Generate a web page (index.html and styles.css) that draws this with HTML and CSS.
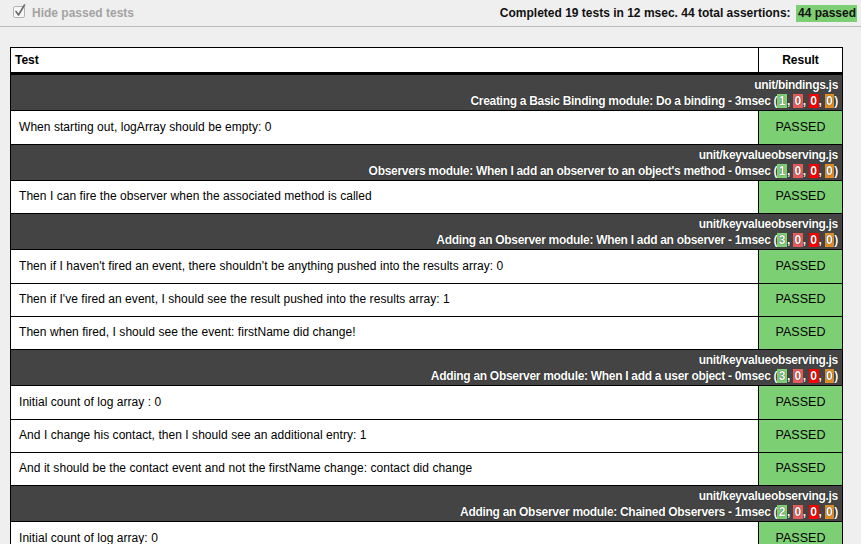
FILE: index.html
```html
<!DOCTYPE html>
<html>
<head>
<meta charset="utf-8">
<link rel="stylesheet" href="styles.css">
</head>
<body>
<div class="topbar">
  <label class="hide">
    <svg class="cb" width="14" height="15" viewBox="0 0 14 15">
      <rect x="0.5" y="2.5" width="11" height="11" rx="1.5" fill="#f7f7f7" stroke="#b3b3b3"/>
      <path d="M3 7.5 L5.5 11 L11.5 1" fill="none" stroke="#6a6a6a" stroke-width="1.6" stroke-linecap="round" stroke-linejoin="round"/>
    </svg>
    <span>Hide passed tests</span>
  </label>
  <div class="summary">Completed 19 tests in 12 msec. 44 total assertions: <span class="allpass">44 passed</span></div>
</div>

<table class="results">
  <thead>
    <tr><th class="th-test">Test</th><th class="th-result">Result</th></tr>
  </thead>
  <tbody>
    <tr class="module"><td colspan="2"><div>unit/bindings.js</div><div>Creating a Basic Binding module: Do a binding - 3msec (<span class="b pass">1</span>, <span class="b fail">0</span>, <span class="b err">0</span>, <span class="b skip">0</span>)</div></td></tr>
    <tr class="test"><td>When starting out, logArray should be empty: 0</td><td class="passed">PASSED</td></tr>

    <tr class="module"><td colspan="2"><div>unit/keyvalueobserving.js</div><div>Observers module: When I add an observer to an object's method - 0msec (<span class="b pass">1</span>, <span class="b fail">0</span>, <span class="b err">0</span>, <span class="b skip">0</span>)</div></td></tr>
    <tr class="test"><td>Then I can fire the observer when the associated method is called</td><td class="passed">PASSED</td></tr>

    <tr class="module"><td colspan="2"><div>unit/keyvalueobserving.js</div><div>Adding an Observer module: When I add an observer - 1msec (<span class="b pass">3</span>, <span class="b fail">0</span>, <span class="b err">0</span>, <span class="b skip">0</span>)</div></td></tr>
    <tr class="test"><td>Then if I haven't fired an event, there shouldn't be anything pushed into the results array: 0</td><td class="passed">PASSED</td></tr>
    <tr class="test"><td>Then if I've fired an event, I should see the result pushed into the results array: 1</td><td class="passed">PASSED</td></tr>
    <tr class="test"><td>Then when fired, I should see the event: firstName did change!</td><td class="passed">PASSED</td></tr>

    <tr class="module"><td colspan="2"><div>unit/keyvalueobserving.js</div><div>Adding an Observer module: When I add a user object - 0msec (<span class="b pass">3</span>, <span class="b fail">0</span>, <span class="b err">0</span>, <span class="b skip">0</span>)</div></td></tr>
    <tr class="test"><td>Initial count of log array : 0</td><td class="passed">PASSED</td></tr>
    <tr class="test"><td>And I change his contact, then I should see an additional entry: 1</td><td class="passed">PASSED</td></tr>
    <tr class="test"><td>And it should be the contact event and not the firstName change: contact did change</td><td class="passed">PASSED</td></tr>

    <tr class="module"><td colspan="2"><div>unit/keyvalueobserving.js</div><div>Adding an Observer module: Chained Observers - 1msec (<span class="b pass">2</span>, <span class="b fail">0</span>, <span class="b err">0</span>, <span class="b skip">0</span>)</div></td></tr>
    <tr class="test"><td>Initial count of log array: 0</td><td class="passed">PASSED</td></tr>
  </tbody>
</table>
</body>
</html>
```

FILE: styles.css
```css
html, body {
  margin: 0;
  padding: 0;
  background: #efefef;
  font-family: "Liberation Sans", Arial, Helvetica, sans-serif;
  font-size: 12px;
  color: #000;
  overflow: hidden;
}

.topbar {
  height: 26px;
  border-bottom: 1px solid #b9b9b9;
  display: flex;
  align-items: center;
  justify-content: space-between;
  padding: 0 4px 0 13px;
}

.hide {
  display: flex;
  align-items: center;
  gap: 5px;
  color: #a3a3a3;
  font-weight: bold;
  margin-top: -1px;
}

.cb {
  display: block;
  margin-top: -3px;
}

.summary {
  font-weight: bold;
  color: #111;
}

.allpass {
  background: #7dcf74;
  padding: 1px 1px 2px 2px;
  margin-left: 2px;
}

.results {
  margin: 20px 0 0 10px;
  width: 833px;
  border-collapse: collapse;
  background: #fff;
  border: 1px solid #000;
}

.results th {
  height: 24px;
  padding: 0 4px;
  font-weight: bold;
  text-align: left;
  border-bottom: 3px solid #000;
  border-left: 1px solid #000;
}

.results th.th-result {
  text-align: center;
  width: 75px;
}

.results td {
  border: 1px solid #000;
}

.module td {
  background: #444;
  color: #fff;
  font-weight: bold;
  text-align: right;
  padding: 2px 4px 1.25px 4px;
  line-height: 16px;
  letter-spacing: -0.3px;
  text-shadow: 0 0 1px #000;
}

.b {
  padding: 0 1.5px;
  letter-spacing: 0;
}
.b.pass { background: #7dcf74; }
.b.fail { background: #e85c5c; }
.b.err { background: #ff0000; }
.b.skip { background: #df8c25; }

.test td {
  height: 32.25px;
  padding: 0 8px;
  line-height: 15px;
  letter-spacing: 0.05px;
}

.test td.passed {
  background: #7dcf74;
  text-align: center;
  padding: 0 4px;
  font-size: 12.5px;
}
```
